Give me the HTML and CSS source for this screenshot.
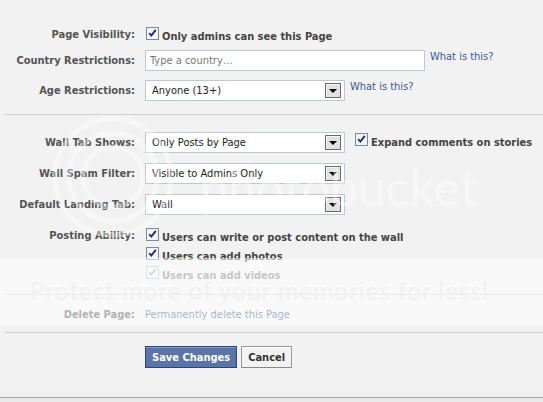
FILE: index.html
```html
<!DOCTYPE html>
<html lang="en">
<head>
  <meta charset="UTF-8" />
  <title>Page Settings</title>
  <link rel="stylesheet" href="styles.css">
</head>
<body>
  <svg class="defs" width="0" height="0">
    <symbol id="cb-on" viewBox="0 0 13 13">
      <rect x="0.5" y="0.5" width="12" height="12" fill="#eceef2" stroke="#7c87a0"/>
      <rect x="1.5" y="1.5" width="10" height="10" fill="#f7f7f9"/>
      <path d="M3.2 6.2 L5.3 8.6 L9.8 2.8" fill="none" stroke="#1f2e72" stroke-width="1.9"/>
    </symbol>
    <symbol id="cb-off" viewBox="0 0 13 13">
      <rect x="0.5" y="0.5" width="12" height="12" fill="#f3f3f3" stroke="#b9bfcb"/>
      <path d="M3.2 6.2 L5.3 8.6 L9.8 2.8" fill="none" stroke="#a9adb8" stroke-width="1.9"/>
    </symbol>
  </svg>

  <div class="settings">
    <div class="row row-check">
      <div class="label">Page Visibility:</div>
      <div class="value">
        <label class="check"><svg class="cb"><use href="#cb-on"/></svg>Only admins can see this Page</label>
      </div>
    </div>

    <div class="row row-country">
      <div class="label">Country Restrictions:</div>
      <div class="value">
        <input type="text" class="text-input" placeholder="Type a country…" />
        <a class="help" href="#">What is this?</a>
      </div>
    </div>

    <div class="row row-age">
      <div class="label">Age Restrictions:</div>
      <div class="value">
        <div class="select"><span>Anyone (13+)</span><span class="arrow"></span></div>
        <a class="help" href="#">What is this?</a>
      </div>
    </div>

    <div class="divider first"></div>

    <div class="row row-wall">
      <div class="label">Wall Tab Shows:</div>
      <div class="value">
        <div class="select"><span>Only Posts by Page</span><span class="arrow"></span></div>
        <label class="check check-side"><svg class="cb"><use href="#cb-on"/></svg>Expand comments on stories</label>
      </div>
    </div>

    <div class="row row-next">
      <div class="label">Wall Spam Filter:</div>
      <div class="value">
        <div class="select"><span>Visible to Admins Only</span><span class="arrow"></span></div>
      </div>
    </div>

    <div class="row row-next">
      <div class="label">Default Landing Tab:</div>
      <div class="value">
        <div class="select"><span>Wall</span><span class="arrow"></span></div>
      </div>
    </div>

    <div class="row row-check row-posting">
      <div class="label">Posting Ability:</div>
      <div class="value stack">
        <label class="check"><svg class="cb"><use href="#cb-on"/></svg>Users can write or post content on the wall</label>
        <label class="check"><svg class="cb"><use href="#cb-on"/></svg>Users can add photos</label>
        <label class="check disabled"><svg class="cb"><use href="#cb-off"/></svg>Users can add videos</label>
      </div>
    </div>

    <div class="divider mid"></div>

    <div class="row row-delete">
      <div class="label">Delete Page:</div>
      <div class="value">
        <a class="link" href="#">Permanently delete this Page</a>
      </div>
    </div>

    <div class="divider last"></div>

    <div class="actions">
      <button class="btn btn-save">Save Changes</button>
      <button class="btn btn-cancel">Cancel</button>
    </div>

    <div class="page-end"></div>
  </div>

  <!-- image host watermark -->
  <div class="wm-logo">
    <svg width="130" height="130" viewBox="0 0 130 130">
      <circle cx="65" cy="65" r="58" fill="none" stroke="#fff" stroke-width="5" opacity="0.4"/>
      <circle cx="65" cy="65" r="44" fill="none" stroke="#fff" stroke-width="5" opacity="0.4"/>
      <circle cx="65" cy="65" r="30" fill="none" stroke="#fff" stroke-width="5" opacity="0.4"/>
    </svg>
    <span class="wm-name">photobucket</span>
  </div>
  <div class="wm-band">
    <span class="wm-text">Protect more of your memories for less!</span>
  </div>
</body>
</html>
```

FILE: styles.css
```css
body {
  margin: 0;
  height: 402px;
  overflow: hidden;
  position: relative;
  background-color: #f2f2f2;
  font-family: "DejaVu Sans Condensed", "Liberation Sans", sans-serif;
  font-size: 11px;
  color: #333;
}

.defs {
  position: absolute;
}

.settings {
  padding-top: 27px;
}

.row {
  display: grid;
  grid-template-columns: 135px 1fr;
  column-gap: 10px;
  align-items: center;
}

.row-check {
  align-items: start;
}

.label {
  text-align: right;
  font-weight: bold;
  color: #555;
  line-height: 15px;
  white-space: nowrap;
}

.value {
  display: flex;
  align-items: center;
}

.stack {
  display: block;
}

.check {
  display: block;
  line-height: 19px;
  font-weight: bold;
  color: #444;
  white-space: nowrap;
}

.check.disabled {
  color: #808080;
}

.cb {
  width: 13px;
  height: 13px;
  margin: 0 3px 0 1px;
  vertical-align: baseline;
}

.check-side {
  margin-left: 9px;
  margin-top: 1px;
  align-self: flex-start;
}

.row-country {
  margin-top: 4px;
}

.row-age {
  margin-top: 9px;
}

.row-wall {
  margin-top: 17px;
}

.row-next {
  margin-top: 10px;
}

.row-posting {
  margin-top: 13px;
}

.row-delete {
  margin-top: 13px;
}

.row-delete .label,
.row-delete .value {
  line-height: 14px;
}

.text-input {
  width: 280px;
  height: 21px;
  box-sizing: border-box;
  margin: 0;
  padding: 0 4px;
  border: 1px solid #bdc7d8;
  background: #fff;
  font: inherit;
  color: #222;
  outline: none;
}

.text-input::placeholder {
  color: #777;
}

.select {
  width: 200px;
  height: 21px;
  box-sizing: border-box;
  border: 1px solid #bdc7d8;
  background: #fff;
  display: flex;
  align-items: center;
  justify-content: space-between;
  padding: 0 3px 0 6px;
  color: #222;
  white-space: nowrap;
}

.arrow {
  width: 16px;
  height: 15px;
  box-sizing: border-box;
  border: 1px solid #6a6a6a;
  background: #e2e2e2;
  box-shadow: inset 1px 1px 0 #f6f6f6;
  display: flex;
  align-items: flex-end;
  justify-content: center;
  padding-bottom: 4px;
}

.arrow::after {
  content: "";
  width: 0;
  height: 0;
  border-left: 4px solid transparent;
  border-right: 4px solid transparent;
  border-top: 4px solid #000;
}

.help {
  align-self: flex-start;
  margin-left: 5px;
  line-height: 14px;
  color: #3b5998;
  text-decoration: none;
  white-space: nowrap;
}

.link {
  color: #3b5998;
  text-decoration: none;
}

.divider {
  height: 1px;
  margin-left: 5px;
  background-color: #d0d0d0;
}

.divider.first {
  margin-top: 13px;
}

.divider.mid {
  margin-top: 9px;
}

.divider.last {
  margin-top: 10px;
}

.actions {
  margin-top: 13px;
  padding-left: 145px;
  display: flex;
  gap: 4px;
}

.btn {
  height: 22px;
  box-sizing: border-box;
  padding: 0 6px;
  margin: 0;
  font-family: inherit;
  font-size: 11px;
  font-weight: bold;
  cursor: pointer;
}

.btn-save {
  background-color: #5b74a8;
  border: 1px solid #29447e;
  box-shadow: inset 0 1px 0 #8a9cc2;
  color: #fff;
}

.btn-cancel {
  background-color: #f2f2f2;
  border: 1px solid #999;
  border-bottom-color: #888;
  box-shadow: inset 0 1px 0 #fff;
  color: #333;
}

.page-end {
  margin-top: 29px;
  height: 4px;
  border-top: 1px solid #a3a3a3;
  background-color: #e9e9e9;
}

.wm-logo {
  position: absolute;
  left: 48px;
  top: 112px;
  display: flex;
  align-items: flex-end;
  pointer-events: none;
}

.wm-name {
  margin-left: 22px;
  margin-bottom: 30px;
  font-family: Lato, sans-serif;
  font-size: 50px;
  line-height: 50px;
  color: rgba(255, 255, 255, 0.4);
}

.wm-band {
  position: absolute;
  left: 0;
  right: 0;
  top: 258px;
  height: 68px;
  background-color: rgba(255, 255, 255, 0.55);
  display: flex;
  align-items: center;
  justify-content: center;
  pointer-events: none;
}

.wm-text {
  padding-bottom: 4px;
  margin-left: -24px;
  font-family: Lato, sans-serif;
  font-size: 25px;
  letter-spacing: 0.7px;
  color: #f1f1f1;
  white-space: nowrap;
}
```
